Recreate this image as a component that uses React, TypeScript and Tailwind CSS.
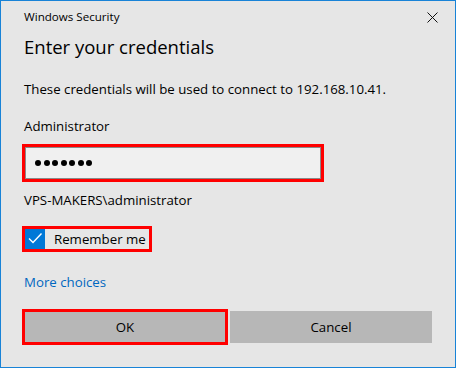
import * as React from "react"

function CloseIcon() {
  return (
    <svg width="11" height="11" viewBox="0 0 11 11" aria-hidden>
      <path d="M0.5 0.5 L10.5 10.5 M10.5 0.5 L0.5 10.5" stroke="#111" strokeWidth="1" fill="none" />
    </svg>
  )
}

function Checkbox() {
  return (
    <span className="flex h-[20px] w-[20px] shrink-0 items-center justify-center bg-[#0078d7]">
      <svg width="20" height="20" viewBox="0 0 20 20" aria-hidden>
        <path d="M4 9.5 L8 13.5 L16.5 4.5" stroke="#fff" strokeWidth="1.4" fill="none" />
      </svg>
    </span>
  )
}

export default function App() {
  const dots = Array.from({ length: 7 })

  return (
    <div
      className="flex h-[368px] w-[456px] flex-col border border-[#1883d7] bg-[#e6e6e6] text-[13.25px] leading-[18px] text-black"
      style={{ fontFamily: '"Open Sans", "Noto Sans", sans-serif' }}
    >
      {/* title bar */}
      <div className="flex h-[32px] shrink-0 items-center justify-between pl-[23px] pr-[17px]">
        <span className="text-[11.6px]">Windows Security</span>
        <CloseIcon />
      </div>

      <div className="flex flex-col pl-[23px] pr-[23px]">
        <h1 className="text-[18.5px] leading-[28px]">Enter your credentials</h1>

        <p className="mt-[19px]">These credentials will be used to connect to 192.168.10.41.</p>

        <p className="mt-[19px]">Administrator</p>

        <div className="mt-[11px] flex h-[34px] w-[298px] items-center gap-[2.5px] border-2 border-[#8a8a8a] bg-[#f0f0f0] pl-[9px] outline-[3px] outline-offset-[-1px] outline-[#ff0000]">
          {dots.map((_, i) => (
            <span key={i} className="h-[6px] w-[6px] rounded-full bg-black" />
          ))}
        </div>

        <p className="mt-[11px]">VPS-MAKERS\administrator</p>

        <label className="mt-[19px] flex h-[22px] w-[126px] items-center gap-[9px] pl-px outline-[3px] outline-offset-[-1px] outline-[#ff0000]">
          <Checkbox />
          <span>Remember me</span>
        </label>

        <a className="mt-[23px] w-fit text-[#0067c0]">More choices</a>

        <div className="mt-[20px] flex gap-[4px]">
          <button
            type="button"
            className="flex h-[32px] flex-1 items-center justify-center bg-[#b7b7b7] outline-[3px] outline-offset-[-1px] outline-[#ff0000]"
          >
            OK
          </button>
          <button type="button" className="flex h-[32px] flex-1 items-center justify-center bg-[#b7b7b7]">
            Cancel
          </button>
        </div>
      </div>
    </div>
  )
}
